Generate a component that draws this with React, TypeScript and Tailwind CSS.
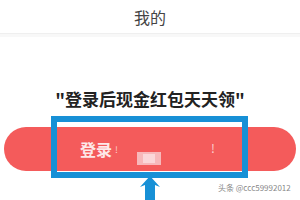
import React from "react";

export default function App() {
  return (
    <div
      className="relative w-[300px] h-[200px] overflow-hidden bg-white"
      style={{ fontFamily: '"Noto Sans CJK SC", "Noto Sans", sans-serif' }}
    >
      <div className="h-[34px] flex items-center justify-center text-[16px] leading-none text-[#444] border-b border-[#efefef]">
        我的
      </div>
      <div className="h-[3px] bg-[#f8f8f8]" />
      <div className="mt-[50px] flex justify-center text-[17px] leading-[24px] font-bold text-[#222]">
        "登录后现金红包天天领"
      </div>
      <div className="mt-[16px] mx-[4px] h-[44px] rounded-full bg-[#f45b5b] flex items-center pl-[76px]">
        <span className="text-[16px] font-bold text-[#fde8e8] leading-none">登录</span>
        <span className="ml-[3px] text-[9px] text-[#fbd0d0] leading-none">!</span>
        <div className="ml-[19px] self-end mb-[6px] w-[24px] h-[13px] bg-[#f7b8ba] flex items-center justify-center">
          <div className="w-[12px] h-[9px] bg-[#fbd7d9]" />
        </div>
        <span className="ml-[50px] mb-[2px] text-[12px] text-[#fbd0d0] leading-none">!</span>
      </div>
      {/* blue annotation box */}
      <div className="absolute left-[51px] top-[116px] w-[197px] h-[62px] border-[6px] border-[#1790d6]" />
      {/* arrow */}
      <svg className="absolute left-[138px] top-[173px]" width="24" height="27" viewBox="0 0 24 27">
        <path d="M7 27 V12 L2 14 L12 3 L22 14 L17 12 V27 Z" fill="#1790d6" />
      </svg>
      <div className="absolute left-[218px] top-[183px] text-[8px] leading-[10px] text-[#888] whitespace-nowrap">
        头条 @ccc59992012
      </div>
    </div>
  );
}
